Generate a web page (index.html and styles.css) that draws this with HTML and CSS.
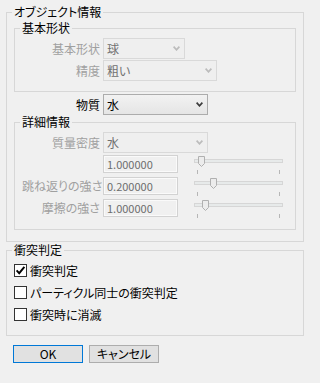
FILE: index.html
```html
<!DOCTYPE html>
<html lang="ja">
<head>
<meta charset="utf-8">
<title>オブジェクト情報</title>
<link rel="stylesheet" href="styles.css">
</head>
<body>
<div class="dialog">
  <fieldset class="group outer">
    <legend>オブジェクト情報</legend>
    <fieldset class="group inner basic">
      <legend>基本形状</legend>
      <div class="row">
        <span class="lbl dis">基本形状</span>
        <div class="combo dis w82"><span>球</span><svg class="chev" width="7" height="5" viewBox="0 0 7 5"><path d="M0.6 0.6 L3.5 3.8 L6.4 0.6" fill="none" stroke-width="1.7"/></svg></div>
      </div>
      <div class="row mt1">
        <span class="lbl dis">精度</span>
        <div class="combo dis w114"><span>粗い</span><svg class="chev" width="7" height="5" viewBox="0 0 7 5"><path d="M0.6 0.6 L3.5 3.8 L6.4 0.6" fill="none" stroke-width="1.7"/></svg></div>
      </div>
    </fieldset>
    <div class="row material">
      <span class="lbl lbl-out">物質</span>
      <div class="combo w105"><span>水</span><svg class="chev" width="7" height="5" viewBox="0 0 7 5"><path d="M0.6 0.6 L3.5 3.8 L6.4 0.6" fill="none" stroke-width="1.7"/></svg></div>
    </div>
    <fieldset class="group inner detail">
      <legend>詳細情報</legend>
      <div class="row">
        <span class="lbl dis">質量密度</span>
        <div class="combo dis w105"><span>水</span><svg class="chev" width="7" height="5" viewBox="0 0 7 5"><path d="M0.6 0.6 L3.5 3.8 L6.4 0.6" fill="none" stroke-width="1.7"/></svg></div>
      </div>
      <div class="param first">
        <span class="lbl dis"></span>
        <div class="textbox">1.000000</div>
        <div class="slider">
          <div class="track"></div>
          <div class="ticks"><i></i><i></i></div>
          <svg class="thumb" style="left:4px" width="7" height="11" viewBox="0 0 7 11"><path d="M0.5 0.5 H6.5 V7.5 L3.5 10.5 L0.5 7.5 Z"/></svg>
        </div>
      </div>
      <div class="param">
        <span class="lbl dis">跳ね返りの強さ</span>
        <div class="textbox">0.200000</div>
        <div class="slider">
          <div class="track"></div>
          <div class="ticks"><i></i><i></i></div>
          <svg class="thumb" style="left:16px" width="7" height="11" viewBox="0 0 7 11"><path d="M0.5 0.5 H6.5 V7.5 L3.5 10.5 L0.5 7.5 Z"/></svg>
        </div>
      </div>
      <div class="param">
        <span class="lbl dis">摩擦の強さ</span>
        <div class="textbox">1.000000</div>
        <div class="slider">
          <div class="track"></div>
          <div class="ticks"><i></i><i></i></div>
          <svg class="thumb" style="left:8px" width="7" height="11" viewBox="0 0 7 11"><path d="M0.5 0.5 H6.5 V7.5 L3.5 10.5 L0.5 7.5 Z"/></svg>
        </div>
      </div>
    </fieldset>
  </fieldset>
  <fieldset class="group collision">
    <legend>衝突判定</legend>
    <label class="check"><span class="box"><svg width="11" height="11" viewBox="0 0 11 11"><path d="M1.6 5.4 L4.2 8.2 L9.4 1.8" fill="none" stroke="#000" stroke-width="1.9"/></svg></span>衝突判定</label>
    <label class="check"><span class="box"></span>パーティクル同士の衝突判定</label>
    <label class="check"><span class="box"></span>衝突時に消滅</label>
  </fieldset>
  <div class="buttons">
    <button class="btn default" type="button">OK</button>
    <button class="btn" type="button">キャンセル</button>
  </div>
</div>
</body>
</html>
```
FILE: styles.css
```css
html, body {
  margin: 0;
  background: #f0f0f0;
}
body {
  font-family: "Noto Sans CJK JP", "Noto Sans", sans-serif;
  font-size: 12px;
  line-height: 14px;
  color: #000;
  font-feature-settings: "palt";
}
.dialog {
  width: 298px;
  padding: 5px 0 0 6px;
}
.group {
  margin: 0;
  border: 1px solid #d7d7d7;
  min-width: 0;
}
.group legend {
  margin-left: -2px;
  padding: 0 2px;
  line-height: 14px;
}
.outer {
  padding: 2px 7px 11px 7px;
}
.inner {
  padding: 3px 7px 10px 7px;
}
.row {
  display: flex;
  align-items: center;
  height: 21px;
}
.mt1 { margin-top: 1px; }
.material { margin-top: 2px; }
.lbl {
  width: 78px;
  margin-right: 3px;
  text-align: right;
  white-space: nowrap;
  flex: none;
}
.lbl-out { width: 86px; }
.dis { color: #a0a0a0; }
.combo {
  box-sizing: border-box;
  height: 21px;
  border: 1px solid #acacac;
  background: linear-gradient(#f2f2f2, #e5e5e5);
  display: flex;
  align-items: center;
  justify-content: space-between;
  padding: 0 4px 0 3px;
  color: #000;
  flex: none;
}
.combo .chev { stroke: #3c3c3c; }
.combo.dis {
  border-color: #d9d9d9;
  background: #efefef;
  color: #707070;
}
.combo.dis .chev { stroke: #bcbcbc; }
.w82 { width: 82px; }
.w114 { width: 114px; }
.w105 { width: 105px; }
.param {
  display: flex;
  align-items: flex-start;
  height: 20px;
  margin-top: 2px;
}
.param.first { margin-top: 2px; }
.param .lbl { line-height: 18px; }
.textbox {
  box-sizing: border-box;
  width: 75px;
  height: 18px;
  border: 1px solid #d2d2d2;
  box-shadow: inset 0 0 0 1px #fafafa;
  background: #f0f0f0;
  color: #6d6d6d;
  font-size: 11px;
  line-height: 16px;
  padding-left: 3px;
  flex: none;
}
.slider {
  position: relative;
  width: 89px;
  height: 20px;
  margin-left: 16px;
  flex: none;
}
.track {
  box-sizing: border-box;
  margin-top: 4px;
  height: 4px;
  border: 1px solid #d6d6d6;
  background: #e7eaea;
}
.ticks {
  display: flex;
  justify-content: space-between;
  padding: 0 3px;
  margin-top: 7px;
  height: 4px;
}
.ticks i {
  display: block;
  width: 1px;
  height: 4px;
  background: #b6b6b6;
}
.thumb {
  position: absolute;
  top: 1px;
  fill: #ececec;
  stroke: #b0b0b0;
}
.collision {
  margin-top: 1px;
  padding: 7px 7px 14px 7px;
}
.check {
  display: flex;
  align-items: center;
  height: 13px;
  margin-top: 9px;
  white-space: nowrap;
}
.check:first-of-type { margin-top: 0; }
.box {
  box-sizing: border-box;
  width: 13px;
  height: 13px;
  border: 1px solid #333;
  background: #fff;
  margin-right: 3px;
  flex: none;
  display: flex;
  align-items: center;
  justify-content: center;
}
.buttons {
  display: flex;
  gap: 6px;
  margin: 9px 0 0 7px;
}
.btn {
  box-sizing: border-box;
  width: 70px;
  height: 18px;
  margin: 0;
  padding: 0;
  border: 1px solid #adadad;
  background: #e1e1e1;
  font-family: inherit;
  font-size: 12px;
  line-height: 14px;
  color: #000;
  font-feature-settings: "palt";
}
.btn.default { border-color: #0078d7; }
```
